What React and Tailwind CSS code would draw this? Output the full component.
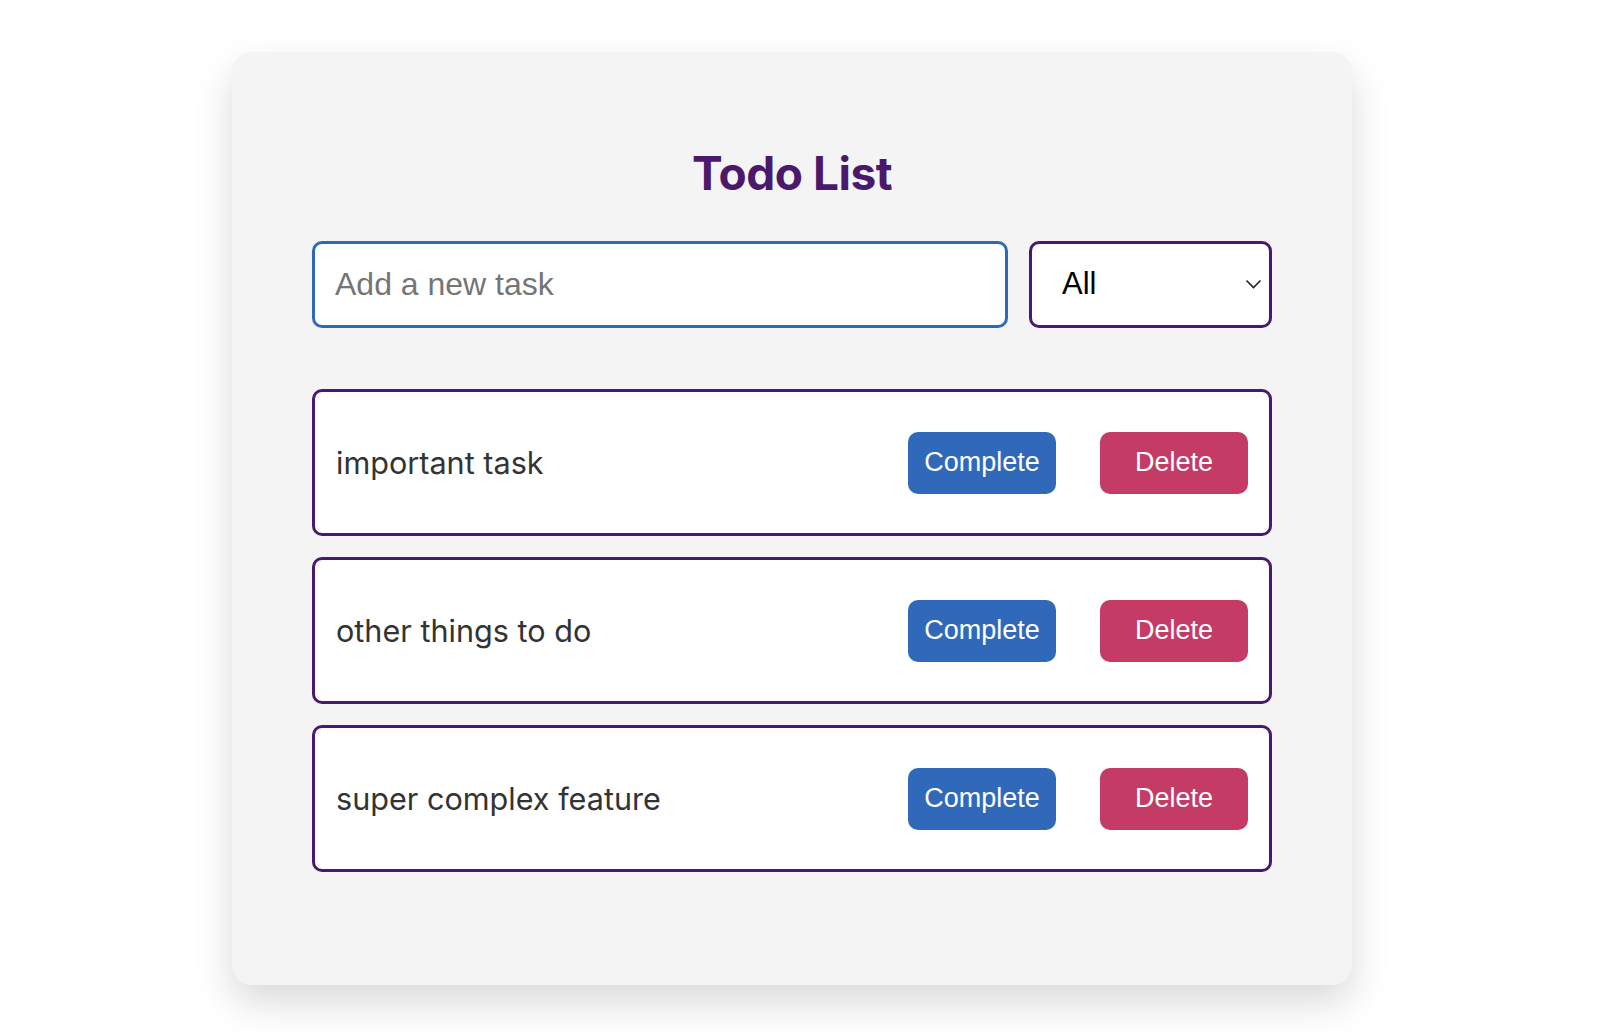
import React, { useState } from "react";

const todos = ["important task", "other things to do", "super complex feature"];

const App = () => {
  const [filter, setFilter] = useState("all");

  return (
    <div className="min-h-screen bg-white pt-[52px] font-['Inter',sans-serif]">
      <div className="ml-[232px] w-[1120px] rounded-[20px] bg-[#f4f4f4] px-[80px] pt-[88px] pb-[113px] shadow-[0_18px_38px_rgba(0,0,0,0.15)]">
        <h1 className="text-center text-[46px] font-bold leading-[66px] tracking-[-0.5px] text-[#4a196b]">
          Todo List
        </h1>

        <div className="mt-[35px] flex gap-[21px]">
          <input
            type="text"
            placeholder="Add a new task"
            className="h-[87px] flex-1 rounded-[10px] border-[3px] border-[#3069b9] bg-white px-[20px] font-['Liberation_Sans',Arial,sans-serif] text-[32px] text-[#333] outline-none placeholder:text-[#757575]"
          />
          <div className="relative w-[243px]">
            <select
              value={filter}
              onChange={(e) => setFilter(e.target.value)}
              className="h-[87px] w-full appearance-none rounded-[10px] border-[3px] border-[#4a196b] bg-white pl-[30px] font-['Liberation_Sans',Arial,sans-serif] text-[31px] text-black outline-none"
            >
              <option value="all">All</option>
              <option value="completed">Completed</option>
              <option value="incomplete">Incomplete</option>
            </select>
            <svg
              className="pointer-events-none absolute right-[10px] top-[38px]"
              width="17"
              height="10"
              viewBox="0 0 17 10"
              fill="none"
            >
              <path d="M1.5 1.5 L8.5 8.5 L15.5 1.5" stroke="#222" strokeWidth="1.6" />
            </svg>
          </div>
        </div>

        <ul className="mt-[61px] flex flex-col gap-[21px]">
          {todos.map((t) => (
            <li
              key={t}
              className="flex h-[147px] items-center rounded-[10px] border-[3px] border-[#4a196b] bg-white px-[21px]"
            >
              <span className="flex-1 text-[30.6px] text-[#333]">{t}</span>
              <button className="h-[62px] w-[148px] rounded-[10px] bg-[#3069b9] font-['Liberation_Sans',Arial,sans-serif] text-[27px] text-white">
                Complete
              </button>
              <button className="ml-[44px] h-[62px] w-[148px] rounded-[10px] bg-[#c43c66] font-['Liberation_Sans',Arial,sans-serif] text-[27px] text-white">
                Delete
              </button>
            </li>
          ))}
        </ul>
      </div>
    </div>
  );
};

export default App;
